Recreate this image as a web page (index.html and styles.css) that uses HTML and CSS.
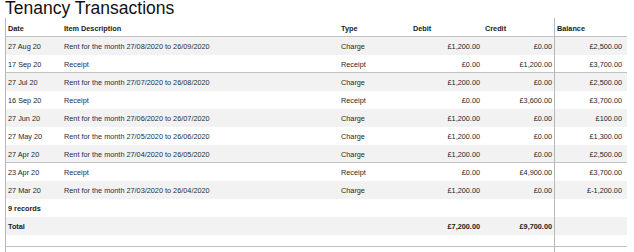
FILE: index.html
```html
<!DOCTYPE html>
<html lang="en">
<head>
    <meta charset="UTF-8">
    <meta name="viewport" content="width=device-width, initial-scale=1.0">
    <title>Tenancy Transactions</title>
    <link rel="stylesheet" href="styles.css">
</head>
<body>
    <h1 class="page-title">Tenancy Transactions</h1>
    <table class="tx-table">
        <colgroup>
            <col class="col-date">
            <col class="col-desc">
            <col class="col-type">
            <col class="col-money">
            <col class="col-money">
            <col class="col-balance">
        </colgroup>
        <thead>
            <tr class="head-row sep">
                <th>Date</th>
                <th>Item Description</th>
                <th>Type</th>
                <th>Debit</th>
                <th>Credit</th>
                <th class="bal">Balance</th>
            </tr>
        </thead>
        <tbody>
            <tr class="alt">
                <td>27 Aug 20</td>
                <td class="desc">Rent for the month 27/08/2020 to 26/09/2020</td>
                <td>Charge</td>
                <td class="num">£1,200.00</td>
                <td class="num">£0.00</td>
                <td class="num bal">£2,500.00</td>
            </tr>
            <tr class="sep">
                <td>17 Sep 20</td>
                <td class="desc">Receipt</td>
                <td>Receipt</td>
                <td class="num">£0.00</td>
                <td class="num">£1,200.00</td>
                <td class="num bal">£3,700.00</td>
            </tr>
            <tr class="alt">
                <td>27 Jul 20</td>
                <td class="desc">Rent for the month 27/07/2020 to 26/08/2020</td>
                <td>Charge</td>
                <td class="num">£1,200.00</td>
                <td class="num">£0.00</td>
                <td class="num bal">£2,500.00</td>
            </tr>
            <tr>
                <td>16 Sep 20</td>
                <td class="desc">Receipt</td>
                <td>Receipt</td>
                <td class="num">£0.00</td>
                <td class="num">£3,600.00</td>
                <td class="num bal">£3,700.00</td>
            </tr>
            <tr class="alt">
                <td>27 Jun 20</td>
                <td class="desc">Rent for the month 27/06/2020 to 26/07/2020</td>
                <td>Charge</td>
                <td class="num">£1,200.00</td>
                <td class="num">£0.00</td>
                <td class="num bal">£100.00</td>
            </tr>
            <tr>
                <td>27 May 20</td>
                <td class="desc">Rent for the month 27/05/2020 to 26/06/2020</td>
                <td>Charge</td>
                <td class="num">£1,200.00</td>
                <td class="num">£0.00</td>
                <td class="num bal">£1,300.00</td>
            </tr>
            <tr class="alt sep">
                <td>27 Apr 20</td>
                <td class="desc">Rent for the month 27/04/2020 to 26/05/2020</td>
                <td>Charge</td>
                <td class="num">£1,200.00</td>
                <td class="num">£0.00</td>
                <td class="num bal">£2,500.00</td>
            </tr>
            <tr>
                <td>23 Apr 20</td>
                <td class="desc">Receipt</td>
                <td>Receipt</td>
                <td class="num">£0.00</td>
                <td class="num">£4,900.00</td>
                <td class="num bal">£3,700.00</td>
            </tr>
            <tr class="alt">
                <td>27 Mar 20</td>
                <td class="desc">Rent for the month 27/03/2020 to 26/04/2020</td>
                <td>Charge</td>
                <td class="num">£1,200.00</td>
                <td class="num">£0.00</td>
                <td class="num bal">£-1,200.00</td>
            </tr>
        </tbody>
        <tfoot>
            <tr class="foot-row">
                <td colspan="2">9 records</td>
                <td></td>
                <td></td>
                <td></td>
                <td class="bal"></td>
            </tr>
            <tr class="alt foot-row">
                <td>Total</td>
                <td></td>
                <td></td>
                <td class="num">£7,200.00</td>
                <td class="num">£9,700.00</td>
                <td class="bal"></td>
            </tr>
            <tr class="tail sep">
                <td></td><td></td><td></td><td></td><td></td><td class="bal"></td>
            </tr>
            <tr class="stub">
                <td></td><td></td><td></td><td></td><td></td><td class="bal"></td>
            </tr>
        </tfoot>
    </table>
</body>
</html>
```

FILE: styles.css
```css
body {
    margin: 0;
    padding: 0 5px;
    font-family: Arial, "Liberation Sans", sans-serif;
    background-color: white;
    color: #222;
}
.page-title {
    margin: 0 0 1px;
    font-size: 17.5px;
    line-height: 17px;
    font-weight: normal;
    color: #111;
}
.tx-table {
    width: 622px;
    table-layout: fixed;
    border-spacing: 0;
    font-size: 7.3px;
}
.col-date {
    width: 56px;
}
.col-desc {
    width: 277px;
}
.col-type {
    width: 72px;
}
.col-money {
    width: 72px;
}
.col-balance {
    width: 73px;
}
.tx-table th,
.tx-table td {
    box-sizing: border-box;
    height: 18px;
    padding: 1px 2px 0 3px;
    text-align: left;
    vertical-align: middle;
    white-space: nowrap;
    color: #262626;
}
.tx-table th {
    font-weight: bold;
    color: #1a1a1a;
}
.tx-table tr > :first-child {
    border-left: 1px solid #b8b8b8;
    padding-left: 2px;
}
.tx-table .bal {
    border-left: 1px solid #b8b8b8;
    padding-left: 2px;
}
.tx-table td.num {
    text-align: right;
}
.tx-table td.num.bal {
    padding-right: 5px;
}
.tx-table .desc {
    color: #1d2d4a;
}
.alt td {
    background-color: #f2f2f2;
}
.sep th,
.sep td {
    box-shadow: inset 0 -1px 0 #c2c2c2;
}
.head-row th {
    height: 19px;
}
.foot-row td {
    font-weight: bold;
    color: #1a1a1a;
}
.tail td {
    height: 12px;
    padding: 0;
}
.stub td {
    height: 6px;
    padding: 0;
}
```
